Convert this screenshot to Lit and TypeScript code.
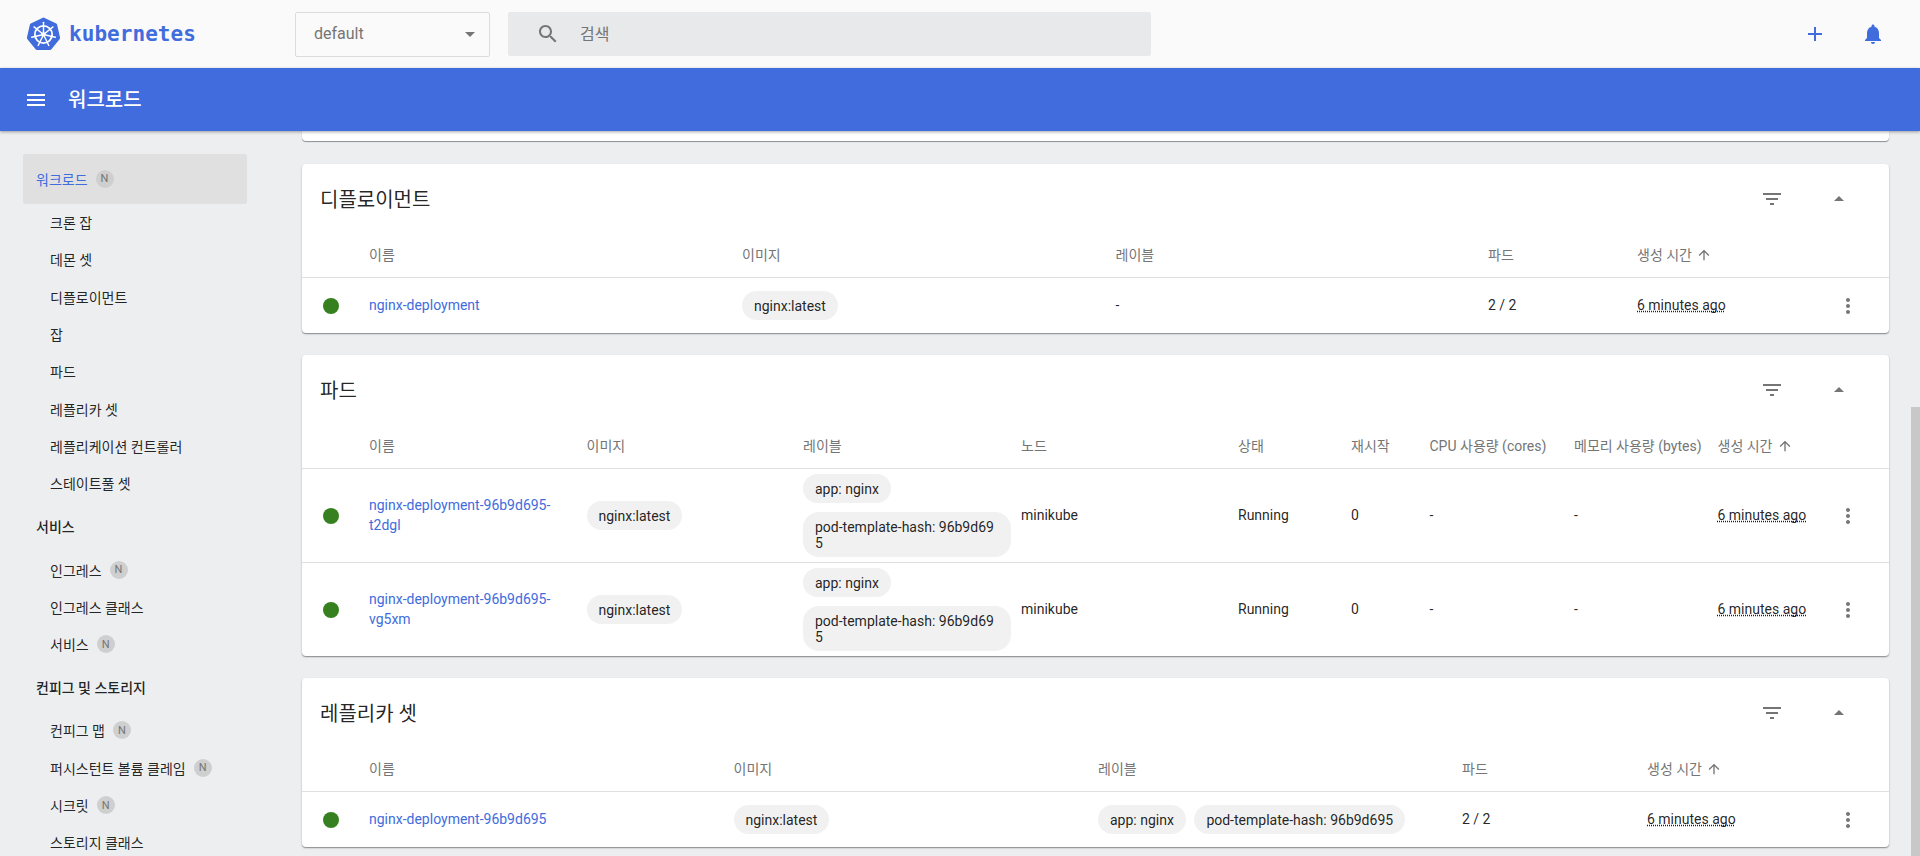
import { LitElement, html, css, svg } from "lit";
import { customElement } from "lit/decorators.js";

const P = {
  search: "M15.5 14h-.79l-.28-.27C15.41 12.59 16 11.11 16 9.5 16 5.91 13.09 3 9.5 3S3 5.91 3 9.5 5.91 16 9.5 16c1.61 0 3.09-.59 4.23-1.57l.27.28v.79l5 4.99L20.49 19l-4.99-5zm-6 0C7.01 14 5 11.99 5 9.5S7.01 5 9.5 5 14 7.01 14 9.5 11.99 14 9.5 14z",
  add: "M19 13h-6v6h-2v-6H5v-2h6V5h2v6h6v2z",
  bell: "M12 22c1.1 0 2-.9 2-2h-4c0 1.1.89 2 2 2zm6-6v-5c0-3.07-1.64-5.64-4.5-6.32V4c0-.83-.67-1.5-1.5-1.5s-1.5.67-1.5 1.5v.68C7.63 5.36 6 7.92 6 11v5l-2 2v1h16v-1l-2-2z",
  menu: "M3 18h18v-2H3v2zm0-5h18v-2H3v2zm0-7v2h18V6H3z",
  filter: "M10 18h4v-2h-4v2zM3 6v2h18V6H3zm3 7h12v-2H6v2z",
  up: "M7 14l5-5 5 5z",
  down: "M7 10l5 5 5-5z",
  more: "M12 8c1.1 0 2-.9 2-2s-.9-2-2-2-2 .9-2 2 .9 2 2 2zm0 2c-1.1 0-2 .9-2 2s.9 2 2 2 2-.9 2-2-.9-2-2-2zm0 6c-1.1 0-2 .9-2 2s.9 2 2 2 2-.9 2-2-.9-2-2-2z",
  arrow: "M4 12l1.41 1.41L11 7.83V20h2V7.83l5.58 5.59L20 12l-8-8-8 8z",
};
const icon = (d: string, cls = "") =>
  html`<svg class="ic ${cls}" viewBox="0 0 24 24"><path d=${d}></path></svg>`;

const hept = Array.from({ length: 7 }, (_, k) => {
  const a = ((-90 + (k * 360) / 7) * Math.PI) / 180;
  return `${(17 + 15 * Math.cos(a)).toFixed(2)},${(17 + 15 * Math.sin(a)).toFixed(2)}`;
}).join(" ");
const spokes = Array.from({ length: 7 }, (_, k) => (k * 360) / 7);
const logo = html`<svg class="logo" viewBox="0 0 34 34">
  <polygon points=${hept} fill="#416cdd" stroke="#416cdd" stroke-width="3" stroke-linejoin="round"></polygon>
  <circle cx="17" cy="17" r="8.4" fill="none" stroke="#fff" stroke-width="1.7"></circle>
  <circle cx="17" cy="17" r="2.1" fill="#fff"></circle>
  ${spokes.map(
    (r) => svg`<line x1="17" y1="17" x2="17" y2="5.2" stroke="#fff" stroke-width="1.4" stroke-linecap="round" transform="rotate(${r} 17 17)"></line>`
  )}
</svg>`;

type Nav = { t: string; n?: boolean; kind?: string };
const NAV: Nav[] = [
  { t: "워크로드", n: true, kind: "active" },
  { t: "크론 잡" }, { t: "데몬 셋" }, { t: "디플로이먼트" }, { t: "잡" }, { t: "파드" },
  { t: "레플리카 셋" }, { t: "레플리케이션 컨트롤러" }, { t: "스테이트풀 셋" },
  { t: "서비스", kind: "section" },
  { t: "인그레스", n: true }, { t: "인그레스 클래스" }, { t: "서비스", n: true },
  { t: "컨피그 및 스토리지", kind: "section" },
  { t: "컨피그 맵", n: true }, { t: "퍼시스턴트 볼륨 클레임", n: true }, { t: "시크릿", n: true },
  { t: "스토리지 클래스" },
];

const chips = (list: string[]) =>
  html`<div class="chips">${list.map((c) => html`<span class="chip">${c}</span>`)}</div>`;
const time = html`<span class="time">6 minutes ago</span>`;
const dot = html`<div class="dotcell"><i class="dot"></i></div>`;
const more = html`<div class="morecell">${icon(P.more, "grey")}</div>`;
const spacer = html`<div></div>`;
const hcell = (t: string) => html`<div class="hcell">${t}</div>`;
const sorted = html`<div class="hcell sorted">생성 시간 ${icon(P.arrow, "sort")}</div>`;

const card = (title: string, cls: string, heads: unknown[], rows: unknown[][]) => html`
  <section class="card ${cls}">
    <div class="title">
      <h2>${title}</h2>
      <span class="act filter">${icon(P.filter, "grey")}</span>
      <span class="act collapse">${icon(P.up, "grey")}</span>
    </div>
    <div class="row head">${spacer}${heads}${spacer}</div>
    ${rows.map((r) => html`<div class="row">${dot}${r}${more}</div>`)}
  </section>`;

const link = (t: string) => html`<div class="cell"><a class="link">${t}</a></div>`;
const cell = (t: unknown) => html`<div class="cell">${t}</div>`;
const podRow = (name: string) => [
  link(name),
  cell(chips(["nginx:latest"])),
  cell(chips(["app: nginx", "pod-template-hash: 96b9d695"])),
  cell("minikube"), cell("Running"), cell("0"), cell("-"), cell("-"), cell(time),
];

@customElement("app-root")
export class AppRoot extends LitElement {
  static styles = css`
    :host {
      display: block; position: relative; height: 856px; overflow: hidden;
      font-family: Roboto, "Noto Sans CJK KR", sans-serif; font-size: 14px;
      color: rgba(0,0,0,.87); background: #eceef0;
    }
    * { box-sizing: border-box; }
    .ic { width: 24px; height: 24px; display: block; fill: currentColor; flex: none; }
    .grey { color: #757575; }
    .top { height: 68px; background: #fafafa; display: flex; align-items: center; padding-left: 26px; }
    .logo { width: 35px; height: 35px; flex: none; }
    .brand { font-family: "DejaVu Sans Mono", monospace; font-size: 21px; font-weight: 700; color: #416cdd; margin-left: 8px; width: 226px; letter-spacing: .05px; }
    .select { width: 195px; height: 45px; border: 1px solid #dcdcdc; border-radius: 2px; display: flex; align-items: center; padding: 0 7px 0 18px; font-size: 16px; color: #757575; margin-right: 18px; background: #fafafa; }
    .select span { flex: 1; position: relative; top: -1px; }
    .search { width: 643px; height: 44px; background: #e8e9ea; border-radius: 2px; display: flex; align-items: center; padding-left: 28px; font-size: 16px; color: #757575; gap: 20px; }
    .search span { position: relative; top: -1px; }
    .top-actions { margin-left: auto; display: flex; gap: 34px; padding-right: 35px; color: #416cdd; }
    .bar { position: relative; z-index: 2; height: 63px; background: #416cdd; color: #fff; display: flex; align-items: center; padding-left: 24px; gap: 20px; font-size: 20px; font-weight: 500; box-shadow: 0 1px 3px rgba(0,0,0,.35); }
    .bar span { position: relative; top: -1px; }
    .body { display: flex; height: 725px; overflow: hidden; }
    .side { width: 302px; flex: none; padding: 23px 0 0 23px; }
    .nav { width: 224px; height: 37.3px; display: flex; align-items: center; padding-left: 27px; gap: 8px; white-space: nowrap; }
    .nav.active { height: 49.5px; background: #e0e0e0; border-radius: 2px; padding-left: 13px; color: #416cdd; }
    .nav.section { height: 49px; padding-left: 13px; font-weight: 500; }
    .nbadge { width: 18px; height: 18px; border-radius: 50%; background: #cfcfcf; color: #757575; font-size: 11px; display: flex; align-items: center; justify-content: center; }
    .main { flex: 1; padding-right: 31px; }
    .stub { height: 10px; background: #fff; margin-bottom: 23px; border-radius: 0 0 4px 4px; box-shadow: 0 1px 1px rgba(0,0,0,.4); }
    .card { background: #fff; border-radius: 4px; margin-bottom: 22px; box-shadow: 0 1px 1.5px rgba(0,0,0,.45); }
    .title { height: 69px; display: flex; align-items: center; padding-left: 18px; position: relative; }
    .title h2 { margin: 0; font-size: 20px; font-weight: 400; flex: 1; }
    .act { display: block; position: absolute; top: 23px; }
    .filter { right: 105px; }
    .collapse { right: 38px; }
    .row { display: grid; align-items: center; min-height: 55px; border-bottom: 1px solid #e0e0e0; }
    .row:last-child { border-bottom: 0; }
    .row.head { min-height: 45px; height: 45px; color: #757575; }
    .deploy .row { grid-template-columns: 67px 373px 373.5px 372.5px 149px 189px 44px 19px; }
    .pods .row { grid-template-columns: 67px 217.5px 216.5px 218px 217px 113px 78.5px 144.5px 143.5px 108.5px 44px 19px; }
    .rs .row { grid-template-columns: 67px 364.5px 364.5px 364px 185px 179px 44px 19px; }
    .hcell { line-height: 19px; padding-right: 8px; }
    .sorted { display: flex; align-items: center; gap: 4px; white-space: nowrap; padding: 0; }
    .sort { width: 16px; height: 16px; }
    .dotcell { padding-left: 21px; }
    .dot { display: block; width: 16px; height: 16px; border-radius: 50%; background: #37801f; }
    .cell { padding-right: 8px; line-height: 19.3px; }
    .link { color: #416cdd; }
    .morecell { display: flex; justify-content: center; }
    .chips { display: flex; flex-wrap: wrap; gap: 9px 8.5px; padding: 5px 0; }
    .chip { background: #f1f1f1; border-radius: 16px; padding: 6.5px 12px; line-height: 16px; word-break: break-all; }
    .pods .chip { max-width: 208px; }
    .cell:has(.chips) { padding-right: 0; }
    .time { text-decoration: underline dotted; text-decoration-skip-ink: none; white-space: nowrap; }
    .thumb { position: absolute; right: 0; top: 407px; bottom: 0; width: 9px; background: #c8c8c8; z-index: 3; }
  `;

  render() {
    return html`
      <header class="top">
        ${logo}<span class="brand">kubernetes</span>
        <div class="select"><span>default</span>${icon(P.down, "grey")}</div>
        <div class="search">${icon(P.search, "grey")}<span>검색</span></div>
        <div class="top-actions">${icon(P.add)}${icon(P.bell)}</div>
      </header>
      <div class="bar">${icon(P.menu)}<span>워크로드</span></div>
      <div class="body">
        <nav class="side">
          ${NAV.map(
            (n) => html`<div class="nav ${n.kind ?? ""}">${n.t}${n.n ? html`<span class="nbadge">N</span>` : ""}</div>`
          )}
        </nav>
        <main class="main">
          <div class="stub"></div>
          ${card("디플로이먼트", "deploy",
            [hcell("이름"), hcell("이미지"), hcell("레이블"), hcell("파드"), sorted],
            [[link("nginx-deployment"), cell(chips(["nginx:latest"])), cell("-"), cell("2 / 2"), cell(time)]])}
          ${card("파드", "pods",
            [hcell("이름"), hcell("이미지"), hcell("레이블"), hcell("노드"), hcell("상태"), hcell("재시작"), hcell("CPU 사용량 (cores)"), hcell("메모리 사용량 (bytes)"), sorted],
            [podRow("nginx-deployment-96b9d695-t2dgl"), podRow("nginx-deployment-96b9d695-vg5xm")])}
          ${card("레플리카 셋", "rs",
            [hcell("이름"), hcell("이미지"), hcell("레이블"), hcell("파드"), sorted],
            [[link("nginx-deployment-96b9d695"), cell(chips(["nginx:latest"])), cell(chips(["app: nginx", "pod-template-hash: 96b9d695"])), cell("2 / 2"), cell(time)]])}
        </main>
      </div>
      <div class="thumb"></div>
    `;
  }
}
